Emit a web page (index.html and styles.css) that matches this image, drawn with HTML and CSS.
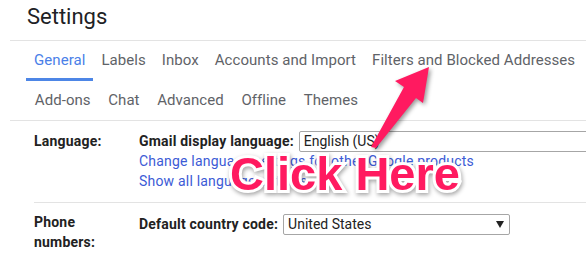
FILE: index.html
```html
<!DOCTYPE html>
<html lang="en">
<head>
  <meta charset="UTF-8">
  <meta name="viewport" content="width=device-width, initial-scale=1.0">
  <title>Settings</title>
  <link rel="stylesheet" href="styles.css">
</head>
<body>
  <div class="page">
    <h1 class="title">Settings</h1>

    <nav class="tabs">
      <div class="tab_row">
        <a class="tab active">General</a>
        <a class="tab">Labels</a>
        <a class="tab">Inbox</a>
        <a class="tab">Accounts and Import</a>
        <a class="tab">Filters and Blocked Addresses</a>
      </div>
      <div class="tab_row second">
        <a class="tab">Add-ons</a>
        <a class="tab">Chat</a>
        <a class="tab">Advanced</a>
        <a class="tab">Offline</a>
        <a class="tab">Themes</a>
      </div>
    </nav>

    <div class="settings">
      <div class="setting">
        <div class="setting_label">Language:</div>
        <div class="setting_value">
          <div class="field">
            <span class="field_name">Gmail display language:</span>
            <span class="select wide">English (US)</span>
          </div>
          <a class="link">Change language settings for other Google products</a>
          <a class="link">Show all language options</a>
        </div>
      </div>
      <div class="setting phone">
        <div class="setting_label">Phone<br>numbers:</div>
        <div class="setting_value">
          <div class="field">
            <span class="field_name">Default country code:</span>
            <span class="select country">United States <i class="caret"></i></span>
          </div>
        </div>
      </div>
    </div>

    <!-- annotation on top of the screenshot -->
    <svg class="arrow" width="586" height="261" viewBox="0 0 586 261">
      <polygon points="429,67 395,81 404,87 371,147 376,148 416,98 423,103" fill="#ff1a60"/>
    </svg>
    <div class="callout">Click Here</div>
  </div>
</body>
</html>
```

FILE: styles.css
```css
* {margin: 0; padding: 0; box-sizing: border-box;}
body {font-family: Roboto, "Liberation Sans", sans-serif; color: #222; background: #fff; overflow: hidden;}
a {text-decoration: none; cursor: pointer;}

.page {position: relative; width: 586px; height: 261px; padding-left: 10px; overflow: hidden;}

.title {height: 41px; padding: 4px 0 0 17px; font-size: 22px; line-height: 26px; font-weight: 400; color: #202124; border-bottom: 1px solid #e3e3e3;}

.tabs {padding-left: 16px; border-bottom: 1px solid #e3e3e3;}
.tabs .tab_row {display: flex; height: 40px;}
.tabs .tab_row.second {height: 39px;}
.tabs .tab {padding: 0 8px; font-size: 15px; line-height: 38px; letter-spacing: 0.06px; color: #5f6368; white-space: nowrap;}
.tabs .tab_row.second .tab {padding: 0 8.8px; line-height: 38px;}
.tabs .tab.active {color: #4a80e8; box-shadow: inset 0 -3px 0 #4d86e6;}

.settings {padding-left: 24px;}
.setting {display: grid; grid-template-columns: 105px 1fr; padding: 10px 0 11px; border-bottom: 1px solid #e3e3e3; font-size: 14px; line-height: 20px; letter-spacing: 0.2px;}
.setting.phone {padding-top: 9px; border-bottom: 0;}
.setting_label {font-weight: 700; color: #222;}
.setting_value {display: flex; flex-direction: column;}
.setting.phone .setting_value {padding-top: 2px;}

.field {display: flex; align-items: center; height: 20px; white-space: nowrap;}
.field_name {font-weight: 700; margin-right: 5px;}
.select {display: flex; align-items: center; justify-content: space-between; height: 21px; padding: 0 5px 0 4px; border: 1px solid #a6a6a6; border-radius: 2px; line-height: 19px; letter-spacing: 0; color: #222; background: #fff;}
.select.wide {width: 320px; flex-shrink: 0;}
.select.country {width: 227px;}
.caret {display: block; width: 0; height: 0; border-left: 4px solid transparent; border-right: 4px solid transparent; border-top: 7px solid #222;}

.link {color: #3c5bd6; white-space: nowrap;}

.arrow {position: absolute; left: 0; top: 0; filter: drop-shadow(2px 2px 2px rgba(0, 0, 0, 0.4));}
.callout {position: absolute; left: 230px; top: 150px; font-family: "Liberation Sans", Arial, sans-serif; font-weight: 700; font-size: 47px; line-height: 47px; color: #ff1a60; white-space: nowrap; -webkit-text-stroke: 6px #fff; paint-order: stroke fill; filter: drop-shadow(1px 2px 2px rgba(0, 0, 0, 0.35));}
```
